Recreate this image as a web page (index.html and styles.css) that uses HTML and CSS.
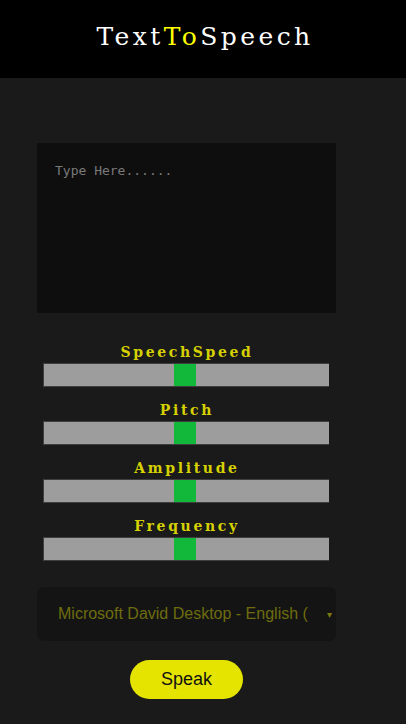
FILE: index.html
```html
<!DOCTYPE html>
<html>
<head>
<meta charset="utf-8">
<link rel="stylesheet" href="styles.css">
</head>
<body>
<header class="top">
  <h1 class="title">Text<span class="hl">To</span>Speech</h1>
</header>
<main class="main">
  <textarea class="input" placeholder="Type Here......"></textarea>
  <div class="controls">
    <div class="ctrl">
      <label class="lbl">SpeechSpeed</label>
      <div class="bar"><div class="thumb"></div></div>
    </div>
    <div class="ctrl">
      <label class="lbl">Pitch</label>
      <div class="bar"><div class="thumb"></div></div>
    </div>
    <div class="ctrl">
      <label class="lbl">Amplitude</label>
      <div class="bar"><div class="thumb"></div></div>
    </div>
    <div class="ctrl">
      <label class="lbl">Frequency</label>
      <div class="bar"><div class="thumb"></div></div>
    </div>
  </div>
  <div class="select">
    <span class="sel-text">Microsoft David Desktop - English (</span>
    <span class="arrow">▾</span>
  </div>
  <button class="speak">Speak</button>
</main>
</body>
</html>
```

FILE: styles.css
```css
html, body {
  margin: 0;
  padding: 0;
  background: #1a1a1a;
  height: 100%;
}
.top {
  background: #000;
  height: 78px;
  display: flex;
  align-items: center;
  justify-content: center;
}
.title {
  margin: 0 0 6px 0;
  font-family: "DejaVu Serif", serif;
  font-weight: normal;
  font-size: 25px;
  letter-spacing: 3.4px;
  color: #fff;
  transform: translateX(2px);
}
.hl { color: #ffff00; }
.main {
  display: flex;
  flex-direction: column;
  padding: 65px 0 0 37px;
  width: 299px;
}
.input {
  width: 299px;
  height: 170px;
  box-sizing: border-box;
  background: #0e0e0e;
  border: none;
  margin: 0;
  padding: 20px 18px;
  font-family: "DejaVu Sans Mono", monospace;
  font-size: 13px;
  color: #ccc;
  resize: none;
  outline: none;
}
.input::placeholder { color: #7a7a7a; }
.controls {
  display: flex;
  flex-direction: column;
  gap: 13px;
  margin-top: 29px;
  padding-left: 6px;
}
.ctrl {
  display: flex;
  flex-direction: column;
  align-items: stretch;
  width: 286px;
}
.lbl {
  text-align: center;
  font-family: "DejaVu Serif", serif;
  font-weight: bold;
  font-size: 14px;
  letter-spacing: 2.65px;
  color: #d6d100;
  height: 20px;
  line-height: 20px;
  margin-bottom: 1px;
  padding-left: 2px;
}
.bar {
  height: 24px;
  box-sizing: border-box;
  background: #9d9d9d;
  border: 1px solid #3f3f3f;
  border-right: none;
  position: relative;
}
.thumb {
  position: absolute;
  left: 130px;
  top: 0;
  bottom: 0;
  width: 22px;
  background: #12b83a;
}
.select {
  margin-top: 26px;
  height: 54px;
  background: #141414;
  border-radius: 7px;
  display: flex;
  align-items: center;
  padding: 0 4px 0 21px;
  font-family: "Liberation Sans", Arial, sans-serif;
  font-size: 16px;
  color: #6e6c0e;
}
.sel-text {
  flex: 1;
  white-space: nowrap;
  overflow: hidden;
  width: 250px;
}
.arrow {
  font-size: 10px;
  color: #7a780e;
}
.speak {
  align-self: center;
  margin-top: 19px;
  width: 113px;
  height: 39px;
  border: none;
  border-radius: 20px;
  background: #e4e400;
  color: #111;
  font-family: "Liberation Sans", Arial, sans-serif;
  font-size: 18px;
  padding: 0;
}
```
